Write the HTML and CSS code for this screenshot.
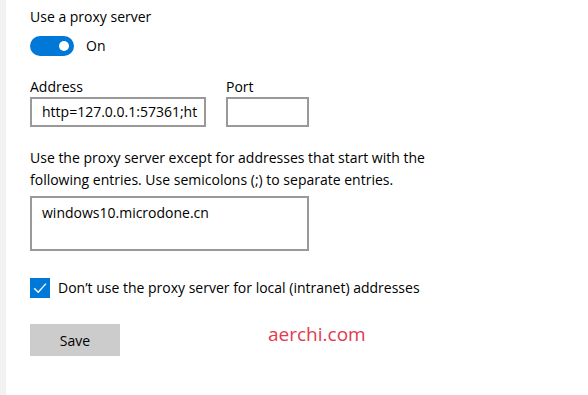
FILE: index.html
```html
<!DOCTYPE html>
<html>
<head>
<meta charset="utf-8">
<link rel="stylesheet" href="styles.css">
</head>
<body>
<div class="page">
  <div class="strip"></div>
  <main class="content">
    <div class="title">Use a proxy server</div>
    <div class="toggle-row">
      <span class="toggle"><span class="knob"></span></span>
      <span class="toggle-label">On</span>
    </div>
    <div class="fields">
      <div class="field field-address">
        <div class="label">Address</div>
        <div class="input">http=127.0.0.1:57361;ht</div>
      </div>
      <div class="field field-port">
        <div class="label">Port</div>
        <div class="input"></div>
      </div>
    </div>
    <p class="desc">Use the proxy server except for addresses that start with the following entries. Use semicolons (;) to separate entries.</p>
    <div class="textarea">windows10.microdone.cn</div>
    <div class="check-row">
      <span class="checkbox">
        <svg width="20" height="20" viewBox="0 0 20 20"><path d="M4.2 10.2 L8.2 14.2 L16 5.6" fill="none" stroke="#fff" stroke-width="1.4"/></svg>
      </span>
      <span class="check-label">Don’t use the proxy server for local (intranet) addresses</span>
    </div>
    <button class="save">Save</button>
  </main>
  <div class="watermark">aerchi.com</div>
</div>
</body>
</html>
```
FILE: styles.css
```css
html, body {
  margin: 0;
  padding: 0;
  background: #fff;
}
body {
  font-family: "Open Sans", "Noto Sans", sans-serif;
  font-size: 14px;
  color: #000;
}
.page {
  position: relative;
  display: flex;
  width: 588px;
  height: 395px;
  overflow: hidden;
}
.strip {
  width: 6px;
  flex: none;
  background: #f2f2f2;
}
.content {
  padding: 7px 0 0 24px;
  display: flex;
  flex-direction: column;
  align-items: flex-start;
}
.title {
  line-height: 20px;
}
.toggle-row {
  display: flex;
  align-items: center;
  margin-top: 9px;
  height: 20px;
}
.toggle {
  width: 44px;
  height: 20px;
  border-radius: 10px;
  background: #0078d7;
  display: flex;
  align-items: center;
  justify-content: flex-end;
  box-sizing: border-box;
  padding-right: 5px;
}
.knob {
  width: 10px;
  height: 10px;
  border-radius: 50%;
  background: #fff;
}
.toggle-label {
  margin-left: 12px;
  line-height: 20px;
}
.fields {
  display: flex;
  gap: 20px;
  margin-top: 21px;
}
.label {
  line-height: 20px;
}
.input {
  box-sizing: border-box;
  height: 30px;
  border: 2px solid #999;
  padding: 0 0 0 10px;
  line-height: 26px;
  white-space: nowrap;
  overflow: hidden;
}
.field-address .input { width: 176px; }
.field-port .input { width: 83px; }
.desc {
  margin: 20px 0 0;
  width: 420px;
  line-height: 22px;
}
.textarea {
  box-sizing: border-box;
  margin-top: 5px;
  width: 279px;
  height: 55px;
  border: 2px solid #999;
  padding: 4px 10px;
  line-height: 22px;
}
.check-row {
  display: flex;
  align-items: center;
  margin-top: 27px;
  height: 20px;
}
.checkbox {
  width: 20px;
  height: 20px;
  background: #0078d7;
  display: block;
}
.checkbox svg { display: block; }
.check-label {
  margin-left: 8px;
  line-height: 20px;
}
.save {
  margin-top: 26px;
  width: 90px;
  height: 32px;
  border: none;
  background: #cccccc;
  font-family: inherit;
  font-size: 14px;
  color: #000;
  padding: 0;
}
.watermark {
  position: absolute;
  left: 268px;
  top: 321px;
  font-family: "Open Sans", sans-serif;
  font-size: 19px;
  color: #e23a4e;
  line-height: 26px;
}
```
